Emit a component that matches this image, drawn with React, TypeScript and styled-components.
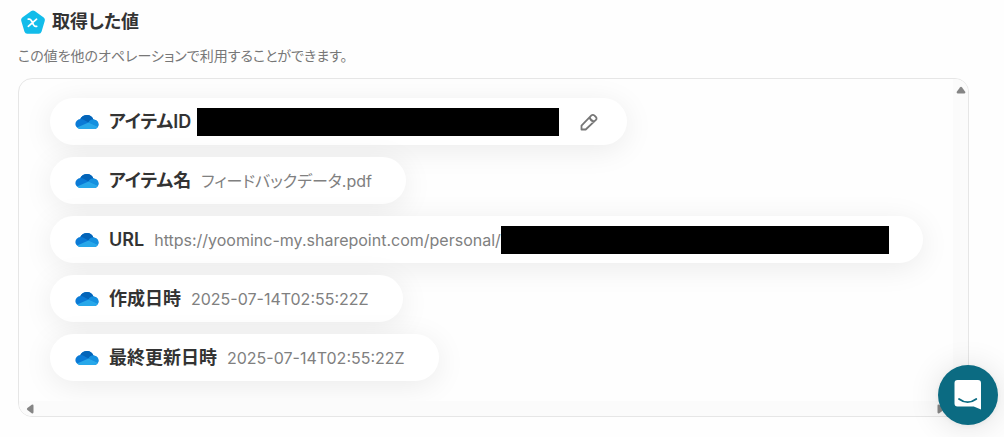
import React from "react";
import styled, { createGlobalStyle } from "styled-components";

const GlobalStyle = createGlobalStyle`
  * { box-sizing: border-box; }
  body {
    margin: 0;
    background: #fefefe;
    color: #333;
    font-family: Inter, "Noto Sans CJK JP", sans-serif;
    font-feature-settings: "palt";
  }
`;

const Page = styled.main`
  padding: 8px 35px 20px 18px;
`;

const Heading = styled.header`
  display: flex;
  align-items: center;
  gap: 6px;
  height: 28px;
  padding-left: 2px;
`;

const Title = styled.h1`
  margin: 0;
  font-size: 18px;
  line-height: 28px;
  font-weight: 600;
`;

const Description = styled.p`
  margin: 10px 0 12px;
  font-size: 14px;
  line-height: 20px;
  color: #777;
`;

const Panel = styled.section`
  display: grid;
  grid-template-columns: minmax(0, 1fr) 15px;
  grid-template-rows: auto 15px;
  border: 1px solid #e6e6e6;
  border-radius: 14px;
`;

const ValueList = styled.ul`
  display: flex;
  flex-direction: column;
  align-items: flex-start;
  gap: 12px;
  margin: 0;
  padding: 19px 30px 20px 31px;
  list-style: none;
  overflow: hidden;
  border-top-left-radius: 13px;
`;

const Pill = styled.li`
  display: flex;
  align-items: center;
  height: 47px;
  padding: 0 34px 0 25px;
  border-radius: 24px;
  background: #fff;
  box-shadow: 0 5px 30px rgba(0, 0, 0, 0.08);
  white-space: nowrap;
`;

const Label = styled.span`
  margin-left: 10px;
  font-size: 18px;
  line-height: 28px;
  font-weight: 600;
`;

const Value = styled.span`
  margin-left: 10px;
  font-size: 16px;
  line-height: 28px;
  color: #808080;
`;

const Redaction = styled.span<{ $width: number; $gap: number }>`
  width: ${(p) => p.$width}px;
  height: 28px;
  margin-left: ${(p) => p.$gap}px;
  background: #000;
`;

const EditButton = styled.button`
  display: flex;
  margin: 0 -6px 0 20px;
  padding: 0;
  border: 0;
  background: none;
  color: #777;
  cursor: pointer;
`;

const Track = styled.div<{ $vertical?: boolean }>`
  display: flex;
  flex-direction: ${(p) => (p.$vertical ? "column" : "row")};
  align-items: center;
  justify-content: space-between;
  padding: ${(p) => (p.$vertical ? "7px 0 4px" : "0 8px 0 7px")};
  background: #fbfbfb;
  border-radius: ${(p) => (p.$vertical ? "0 13px 0 0" : "0 0 0 13px")};
`;

const Corner = styled.div`
  background: #fbfbfb;
  border-bottom-right-radius: 13px;
`;

const Launcher = styled.button`
  position: fixed;
  right: 6px;
  bottom: 12px;
  display: flex;
  align-items: center;
  justify-content: center;
  width: 60px;
  height: 60px;
  padding: 0;
  border: 0;
  border-radius: 50%;
  background: #0b6b82;
  box-shadow: 0 1px 6px rgba(0, 0, 0, 0.06), 0 2px 32px rgba(0, 0, 0, 0.12);
  cursor: pointer;
`;

const ValueIcon = () => (
  <svg width="26" height="26" viewBox="0 0 26 26" aria-hidden="true">
    <path
      d="M11.300 2.100Q13 .9 14.700 2.100L23.700 8.500Q25.400 9.800 24.800 11.700L21.500 22.700Q20.800 24.700 18.800 24.700H7.200Q5.200 24.700 4.500 22.700L1.200 11.700Q.6 9.800 2.300 8.500Z"
      fill="#12bcea"
    />
    <path
      d="M8.200 10.100H9.300C10.300 10.100 10.800 10.700 11.300 11.500L13.600 15.900C14.100 16.800 14.700 17.300 15.600 17.300H16.700M16.600 10.200L8.300 17.300"
      fill="none"
      stroke="#fff"
      strokeWidth="1.700"
      strokeLinecap="round"
    />
  </svg>
);

const CloudIcon = () => (
  <svg width="24" height="16" viewBox="0 0 24 16" aria-hidden="true">
    <path
      d="M6 15C3 15 .4 13 .4 10.100C.4 7.400 2.500 5.300 5.300 5C6.600 2.600 9.100 1 12 1C15 1 17.600 2.900 18.500 5.600C21.400 5.800 23.500 7.800 23.500 10.500C23.500 13.100 21.600 15 19 15Z"
      fill="#0a7ad6"
    />
    <path d="M5.300 5C6.600 2.600 9.100 1 12 1C15 1 17.600 2.900 18.500 5.600C17 5.500 15.600 6 14.400 7L13.500 8.500L8.600 5.700C7.500 5.100 6.400 4.900 5.300 5Z" fill="#0364b8" />
    <path d="M18.500 5.600C21.400 5.800 23.500 7.800 23.500 10.500C23.500 11.400 23.300 12.200 22.900 12.800L13.500 8.500L14.400 7C15.600 6 17 5.500 18.500 5.600Z" fill="#1490df" />
    <path d="M13.500 8.400L22.900 12.700C22.200 14.100 20.700 15 19 15H6C4.500 15 3.100 14.500 2.100 13.500Z" fill="#28a8ea" />
  </svg>
);

const PencilIcon = () => (
  <svg
    width="20"
    height="20"
    viewBox="0 0 20 20"
    fill="none"
    stroke="currentColor"
    strokeWidth="1.800"
    strokeLinejoin="round"
    aria-hidden="true"
  >
    <path d="M2.500 17.500V13.600L12.400 3.400a2 2 0 0 1 2.900 0l1.600 1.600a2 2 0 0 1 0 2.900L6.700 17.500zM10.700 5.200C11.200 7.600 12.700 9.100 15.100 9.600" />
  </svg>
);

const arrowPaths = {
  up: "M3.900 1.400Q5 .2 6.100 1.400L9.200 5.700Q9.900 7.500 8.300 7.500H1.700Q.1 7.500.8 5.700Z",
  down: "M3.900 6.600Q5 7.800 6.100 6.600L9.200 2.300Q9.900.5 8.300.5H1.700Q.1.5.8 2.300Z",
  left: "M1.400 3.900Q.2 5 1.400 6.100L5.700 9.200Q7.500 9.900 7.500 8.300V1.700Q7.500.1 5.700.8Z",
  right: "M6.600 3.900Q7.800 5 6.600 6.100L2.300 9.200Q.5 9.900.5 8.300V1.700Q.5.1 2.300.8Z",
};

const Arrow = ({ to }: { to: keyof typeof arrowPaths }) => {
  const vertical = to === "up" || to === "down";
  const w = vertical ? 10 : 8;
  const h = vertical ? 8 : 10;
  return (
    <svg width={w} height={h} viewBox={`0 0 ${w} ${h}`} aria-hidden="true">
      <path d={arrowPaths[to]} fill="#858585" />
    </svg>
  );
};

const ChatIcon = () => (
  <svg width="28" height="32" viewBox="0 0 28 32" aria-hidden="true">
    <path d="M3.500 1H24a3 3 0 0 1 3 3V30.500L19.800 27.500H3.500a3 3 0 0 1-3-3V4a3 3 0 0 1 3-3z" fill="#fff" />
    <path d="M5 20c5.300 4 12 4 17.300 0" fill="none" stroke="#0b6b82" strokeWidth="1.800" strokeLinecap="round" />
  </svg>
);

type Item = { label: string; value?: string; hidden?: number; editable?: boolean };

const items: Item[] = [
  { label: "アイテムID", hidden: 362, editable: true },
  { label: "アイテム名", value: "フィードバックデータ.pdf" },
  { label: "URL", value: "https://yoominc-my.sharepoint.com/personal/", hidden: 388 },
  { label: "作成日時", value: "2025-07-14T02:55:22Z" },
  { label: "最終更新日時", value: "2025-07-14T02:55:22Z" },
];

export default function App() {
  return (
    <>
      <GlobalStyle />
      <Page>
        <Heading>
          <ValueIcon />
          <Title>取得した値</Title>
        </Heading>
        <Description>この値を他のオペレーションで利用することができます。</Description>
        <Panel>
          <ValueList>
            {items.map((item) => (
              <Pill key={item.label}>
                <CloudIcon />
                <Label>{item.label}</Label>
                {item.value && <Value>{item.value}</Value>}
                {item.hidden && <Redaction $width={item.hidden} $gap={item.value ? 0 : 6} />}
                {item.editable && (
                  <EditButton type="button" aria-label="編集">
                    <PencilIcon />
                  </EditButton>
                )}
              </Pill>
            ))}
          </ValueList>
          <Track $vertical>
            <Arrow to="up" />
            <Arrow to="down" />
          </Track>
          <Track>
            <Arrow to="left" />
            <Arrow to="right" />
          </Track>
          <Corner />
        </Panel>
      </Page>
      <Launcher type="button" aria-label="チャットを開く">
        <ChatIcon />
      </Launcher>
    </>
  );
}
